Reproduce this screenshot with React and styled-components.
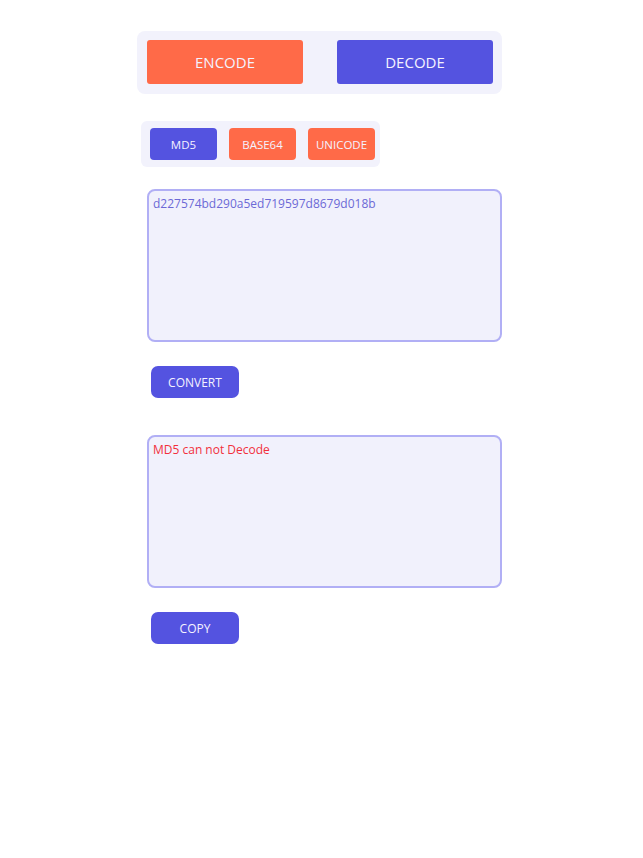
import React, { useState } from "react";
import styled, { createGlobalStyle } from "styled-components";

const GlobalStyle = createGlobalStyle`
  body {
    margin: 0;
    background: #ffffff;
    font-family: "Open Sans", "Noto Sans", sans-serif;
  }
`;

export default function App() {
  const [mode, setMode] = useState("decode");
  const [algo, setAlgo] = useState("md5");
  const [input, setInput] = useState("d227574bd290a5ed719597d8679d018b");
  const [output, setOutput] = useState("MD5 can not Decode");

  const algos = [
    { id: "md5", label: "MD5" },
    { id: "base64", label: "BASE64" },
    { id: "unicode", label: "UNICODE" },
  ];

  return (
    <>
      <GlobalStyle />
      <Page>
        <ModeBar>
          <ModeButton $tone="orange" onClick={() => setMode("encode")}>
            ENCODE
          </ModeButton>
          <ModeButton $tone="blue" onClick={() => setMode("decode")}>
            DECODE
          </ModeButton>
        </ModeBar>

        <AlgoBar>
          {algos.map((a) => (
            <AlgoButton key={a.id} $active={algo === a.id} onClick={() => setAlgo(a.id)}>
              {a.label}
            </AlgoButton>
          ))}
        </AlgoBar>

        <TextBox value={input} onChange={(e) => setInput(e.target.value)} />
        <ActionButton>CONVERT</ActionButton>

        <TextBox $error readOnly value={output} onChange={(e) => setOutput(e.target.value)} />
        <ActionButton>COPY</ActionButton>
      </Page>
    </>
  );
}

const Page = styled.div`
  display: flex;
  flex-direction: column;
  align-items: flex-start;
  width: 365px;
  margin-left: 137px;
  padding-top: 31px;
  padding-bottom: 40px;
`;

const ModeBar = styled.div`
  box-sizing: border-box;
  width: 365px;
  height: 63px;
  padding: 9px 9px 10px 10px;
  display: flex;
  justify-content: space-between;
  background: #f2f2fc;
  border-radius: 8px;
`;

const ModeButton = styled.button`
  width: 156px;
  height: 44px;
  border: none;
  border-radius: 3px;
  background: ${(p) => (p.$tone === "orange" ? "#ff6a48" : "#5453e0")};
  color: #f4f2ff;
  font-family: inherit;
  font-size: 15px;
  cursor: pointer;
`;

const AlgoBar = styled.div`
  margin: 27px 0 0 4px;
  height: 46px;
  box-sizing: border-box;
  padding: 7px 5px 7px 9px;
  display: flex;
  gap: 12px;
  background: #f2f2fc;
  border-radius: 6px;
`;

const AlgoButton = styled.button`
  width: 67px;
  height: 32px;
  border: none;
  border-radius: 4px;
  background: ${(p) => (p.$active ? "#5453e0" : "#ff6a48")};
  color: #f4f2ff;
  font-family: inherit;
  font-size: 11.5px;
  padding: 0;
  cursor: pointer;
`;

const TextBox = styled.textarea`
  box-sizing: border-box;
  margin: ${(p) => (p.$error ? "37px" : "22px")} 0 0 10px;
  width: 355px;
  height: 153px;
  padding: 5px 4px;
  border: 2px solid #b1aff5;
  border-radius: 8px;
  background: #f1f1fc;
  color: ${(p) => (p.$error ? "#f2303c" : "#6c69d6")};
  font-family: inherit;
  font-size: 12px;
  line-height: 16px;
  resize: none;
  outline: none;
`;

const ActionButton = styled.button`
  margin: 24px 0 0 14px;
  width: 88px;
  height: 32px;
  border: none;
  border-radius: 7px;
  background: #5453e0;
  color: #f4f2ff;
  font-family: inherit;
  font-size: 12px;
  cursor: pointer;
`;
